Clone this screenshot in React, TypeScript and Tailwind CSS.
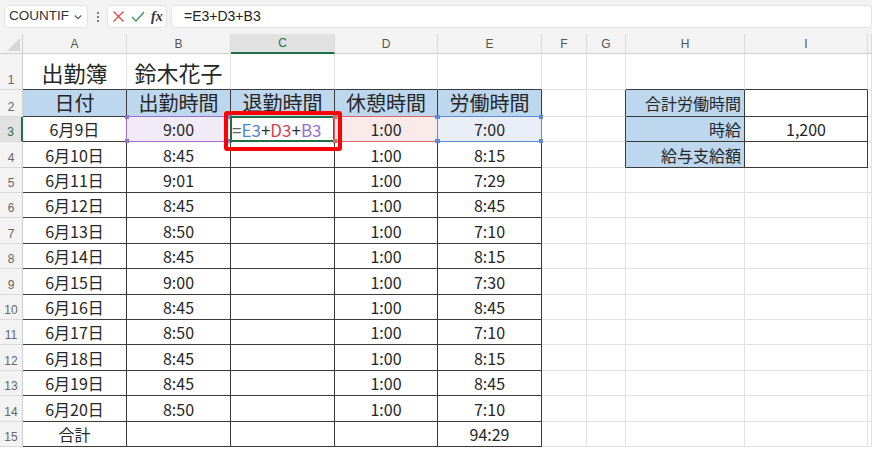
import React from "react";

const COLS = ["", "A", "B", "C", "D", "E", "F", "G", "H", "I", ""];
const W = [
  "w-[23px]",
  "w-[104px]",
  "w-[104px]",
  "w-[104px]",
  "w-[103px]",
  "w-[104px]",
  "w-[45px]",
  "w-[39px]",
  "w-[119px]",
  "w-[123px]",
  "w-[4px]",
];
// rows 1..15
const H = [
  "h-[36px]",
  "h-[27px]",
  "h-[25px]",
  "h-[26px]",
  "h-[25px]",
  "h-[25px]",
  "h-[26px]",
  "h-[25px]",
  "h-[26px]",
  "h-[25px]",
  "h-[25px]",
  "h-[26px]",
  "h-[25px]",
  "h-[26px]",
  "h-[25px]",
];

const data: string[][] = [
  ["6月9日", "9:00", "", "1:00", "7:00"],
  ["6月10日", "8:45", "", "1:00", "8:15"],
  ["6月11日", "9:01", "", "1:00", "7:29"],
  ["6月12日", "8:45", "", "1:00", "8:45"],
  ["6月13日", "8:50", "", "1:00", "7:10"],
  ["6月14日", "8:45", "", "1:00", "8:15"],
  ["6月15日", "9:00", "", "1:00", "7:30"],
  ["6月16日", "8:45", "", "1:00", "8:45"],
  ["6月17日", "8:50", "", "1:00", "7:10"],
  ["6月18日", "8:45", "", "1:00", "8:15"],
  ["6月19日", "8:45", "", "1:00", "8:45"],
  ["6月20日", "8:50", "", "1:00", "7:10"],
  ["合計", "", "", "", "94:29"],
];

const headers = ["日付", "出勤時間", "退勤時間", "休憩時間", "労働時間"];

function Handles({ color }: { color: string }) {
  return (
    <>
      <span className={`absolute -left-[2px] -top-[2px] w-[4px] h-[4px] ${color}`} />
      <span className={`absolute -right-[2px] -top-[2px] w-[4px] h-[4px] ${color}`} />
      <span className={`absolute -left-[2px] -bottom-[2px] w-[4px] h-[4px] ${color}`} />
      <span className={`absolute -right-[2px] -bottom-[2px] w-[4px] h-[4px] ${color}`} />
    </>
  );
}

function Formula() {
  return (
    <span className="text-[17px] pl-[1px] leading-none">
      <span className="text-[#666]">=</span>
      <span className="text-[#4a86d4]">E3</span>
      <span className="text-[#333]">+</span>
      <span className="text-[#d7404b]">D3</span>
      <span className="text-[#333]">+</span>
      <span className="text-[#9b6bd1]">B3</span>
    </span>
  );
}

function cellContent(r: number, c: number): React.ReactNode {
  if (r === 1) {
    if (c === 1) return "出勤簿";
    if (c === 2) return "鈴木花子";
    return null;
  }
  if (r === 2 && c >= 1 && c <= 5) return headers[c - 1];
  if (r >= 3 && c >= 1 && c <= 5) {
    if (r === 3 && c === 3) return <Formula />;
    return data[r - 3][c - 1];
  }
  if (c === 8) {
    if (r === 2) return "合計労働時間";
    if (r === 3) return "時給";
    if (r === 4) return "給与支給額";
  }
  if (c === 9 && r === 3) return "1,200";
  return null;
}

function Cell({ r, c }: { r: number; c: number }) {
  const inTable = r >= 2 && r <= 15 && c >= 1 && c <= 5;
  const inSide = r >= 2 && r <= 4 && (c === 8 || c === 9);
  const darkRight = inTable || inSide || (c === 7 && r >= 2 && r <= 4);
  const darkBottom =
    (c >= 1 && c <= 5 && r >= 1 && r <= 15) || ((c === 8 || c === 9) && r >= 1 && r <= 4);
  const blue = (r === 2 && c >= 1 && c <= 5) || (c === 8 && r >= 2 && r <= 4);

  let bg = blue ? "bg-[#bdd7ee]" : "bg-white";
  if (r === 3 && c === 2) bg = "bg-[#f1ebf8]";
  if (r === 3 && c === 4) bg = "bg-[#fbeaea]";
  if (r === 3 && c === 5) bg = "bg-[#e9eef8]";

  let text = "text-[16px] justify-center";
  if (r === 1) text = "text-[22px] justify-center";
  else if (r === 2 && c <= 5) text = "text-[20px] justify-center";
  else if (c === 8) text = "text-[16px] justify-end pr-[3px]";
  if (r === 3 && c === 3) text = "justify-start";

  return (
    <div
      className={`${W[c]} relative shrink-0 flex items-center border-r border-b ${
        darkRight ? "border-r-[#3a3a3a]" : "border-r-[#e1e1e1]"
      } ${darkBottom ? "border-b-[#3a3a3a]" : "border-b-[#e1e1e1]"} ${bg} ${text} text-[#262626] leading-none whitespace-nowrap`}
    >
      {cellContent(r, c)}
      {r === 3 && c === 2 && (
        <div className="absolute z-10 -left-px -top-px right-[-1px] bottom-[-1px] border border-[#9e6ed8]">
          <Handles color="bg-[#9e6ed8]" />
        </div>
      )}
      {r === 3 && c === 4 && (
        <div className="absolute z-10 -left-px -top-px right-[-1px] bottom-[-1px] border border-[#e0636b]">
          <Handles color="bg-[#e0636b]" />
        </div>
      )}
      {r === 3 && c === 5 && (
        <div className="absolute z-10 -left-px -top-px right-[-1px] bottom-[-1px] border border-[#5b8bd9]">
          <Handles color="bg-[#5b8bd9]" />
        </div>
      )}
      {r === 3 && c === 3 && (
        <>
          <div className="absolute z-10 -left-px -top-px right-[-1px] bottom-[-1px] border-2 border-[#1e7145]" />
          <div className="absolute z-20 left-[-7px] top-[-6px] right-[-8px] bottom-[-10px] border-[4px] border-[#ff0000] rounded-[3px]" />
        </>
      )}
    </div>
  );
}

function RowHeader({ r }: { r: number }) {
  const sel = r === 3;
  return (
    <div
      className={`${W[0]} shrink-0 flex items-end justify-center pb-[3px] text-[12px] leading-none font-['Liberation_Sans',sans-serif] border-b border-b-[#dadada] ${
        sel
          ? "bg-[#e1e1e1] text-[#1e7145] border-r-2 border-r-[#1e7145]"
          : "bg-[#f3f3f3] text-[#666] border-r border-r-[#cfcfcf]"
      }`}
    >
      {r}
    </div>
  );
}

export default function App() {
  const rows = Array.from({ length: 15 }, (_, i) => i + 1);
  return (
    <div className="w-[872px] h-[450px] overflow-hidden bg-white font-['Noto_Sans_CJK_JP','Noto_Sans',sans-serif] select-none">
      {/* formula bar */}
      <div className="h-[34px] bg-[#f3f3f3] flex items-start pt-[5px] pl-[4px]">
        <div className="w-[84px] h-[23px] bg-white rounded-[4px] border border-[#e3e3e3] flex items-center justify-between pl-[4px] pr-[5px] text-[13.5px] text-[#333] font-['Liberation_Sans',sans-serif]">
          <span>COUNTIF</span>
          <svg width="8" height="8" viewBox="0 0 8 8">
            <path d="M0.8 2.5 L4 5.7 L7.2 2.5" fill="none" stroke="#555" strokeWidth="1.1" />
          </svg>
        </div>
        <div className="w-[19px] h-[23px] flex flex-col items-center justify-center gap-[2px]">
          <span className="w-[2px] h-[2px] bg-[#555] rounded-full" />
          <span className="w-[2px] h-[2px] bg-[#555] rounded-full" />
          <span className="w-[2px] h-[2px] bg-[#555] rounded-full" />
        </div>
        <div className="w-[60px] h-[23px] bg-white rounded-[4px] border border-[#e3e3e3] flex items-center pl-[4px] gap-[6px]">
          <svg width="13" height="13" viewBox="0 0 13 13">
            <path d="M1.5 1.5 L11.5 11.5 M11.5 1.5 L1.5 11.5" stroke="#e04848" strokeWidth="1.3" />
          </svg>
          <svg width="14" height="13" viewBox="0 0 14 13">
            <path d="M1 7 L5 11 L13 2" fill="none" stroke="#3c9a55" strokeWidth="1.3" />
          </svg>
          <span className="text-[14px] italic font-bold text-[#333] font-['Liberation_Serif',serif] leading-none">
            fx
          </span>
        </div>
        <div className="ml-[4px] flex-1 h-[23px] bg-white rounded-[4px] border border-[#e3e3e3] flex items-center pl-[12px] text-[14px] text-[#222] font-['Liberation_Sans',sans-serif]">
          =E3+D3+B3
        </div>
      </div>
      {/* column headers */}
      <div className="flex h-[20px]">
        {COLS.map((l, c) => {
          if (c === 0)
            return (
              <div
                key={c}
                className={`${W[0]} shrink-0 relative bg-[#f3f3f3] border-r border-b border-[#cfcfcf]`}
              >
                <svg className="absolute right-[2px] bottom-[2px]" width="13" height="13" viewBox="0 0 13 13">
                  <path d="M13 0 L13 13 L0 13 Z" fill="#d6d6d6" />
                </svg>
              </div>
            );
          const sel = c === 3;
          return (
            <div
              key={c}
              className={`${W[c]} shrink-0 flex items-center justify-center text-[12px] leading-none font-['Liberation_Sans',sans-serif] border-r border-r-[#dadada] ${
                sel
                  ? "bg-[#e1e1e1] text-[#1e7145] border-b-2 border-b-[#1e7145]"
                  : "bg-[#f3f3f3] text-[#555] border-b border-b-[#cfcfcf]"
              }`}
            >
              {l}
            </div>
          );
        })}
      </div>
      {rows.map((r) => (
        <div key={r} className={`flex ${H[r - 1]}`}>
          <RowHeader r={r} />
          {COLS.slice(1).map((_, i) => (
            <Cell key={i} r={r} c={i + 1} />
          ))}
        </div>
      ))}
    </div>
  );
}
